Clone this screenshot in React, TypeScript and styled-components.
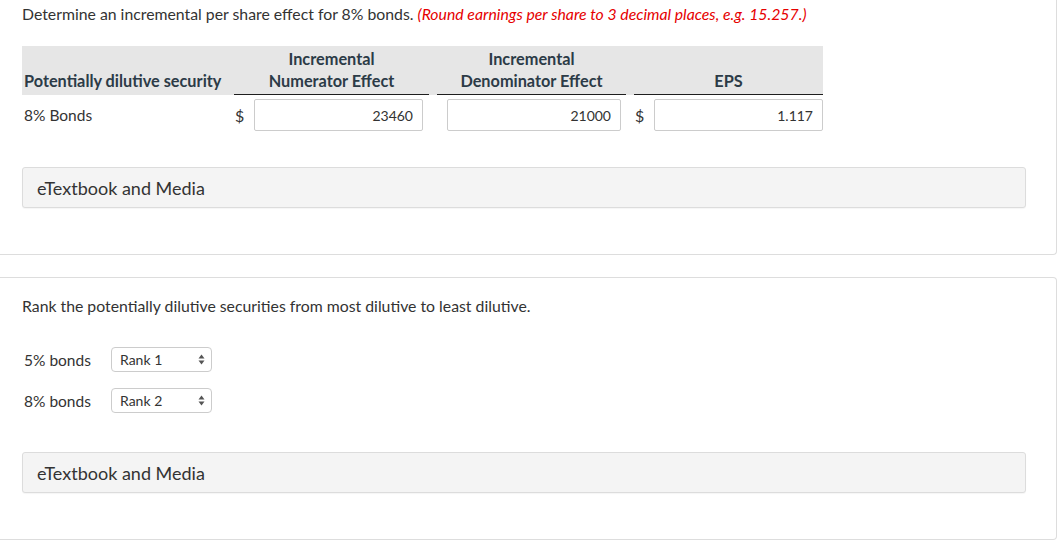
import React from "react";
import styled, { createGlobalStyle } from "styled-components";

const Global = createGlobalStyle`
  html, body { margin: 0; padding: 0; background: #ffffff; }
  body { font-family: Lato, "Noto Sans", sans-serif; color: #333333; }
  * { box-sizing: border-box; }
`;

const Page = styled.div`
  width: 1062px;
  height: 548px;
  overflow: hidden;
  padding-right: 5px;
  display: flex;
  flex-direction: column;
  gap: 22px;
`;

const Card = styled.section<{ $first?: boolean }>`
  background: #fff;
  border: 1px solid #dddddd;
  border-left: none;
  border-top: ${(p) => (p.$first ? "none" : "1px solid #dddddd")};
  border-radius: ${(p) => (p.$first ? "0 0 4px 0" : "0 4px 4px 0")};
  padding: ${(p) => (p.$first ? "3px 30px 46px 22px" : "17px 30px 46px 22px")};
`;

const Prompt = styled.p`
  margin: 0;
  font-size: 15.8px;
  line-height: 21px;
  color: #333;
`;

const Hint = styled.em`
  color: #e60000;
  font-style: italic;
`;

const Table = styled.div`
  margin-top: 22px;
  width: 801px;
  display: grid;
  grid-template-columns: 204px 203px 197px 197px;
`;

const HeadCell = styled.div<{ $first?: boolean }>`
  background: #e6e6e6;
  padding: ${(p) => (p.$first ? "2px 0 0 2px" : "2px 0 0 8px")};
  display: flex;
  align-items: flex-end;
`;

const HeadLabel = styled.div<{ $rule?: boolean; $left?: boolean }>`
  width: 100%;
  font-weight: 700;
  font-size: 16.3px;
  line-height: 22px;
  color: #2c3b47;
  white-space: nowrap;
  text-align: ${(p) => (p.$left ? "left" : "center")};
  border-bottom: ${(p) => (p.$rule ? "1px solid #1e1e1e" : "1px solid transparent")};
  padding-bottom: 2px;
`;

const BodyCell = styled.div<{ $first?: boolean }>`
  padding: ${(p) => (p.$first ? "0 0 0 2px" : "0 0 0 5px")};
  margin-top: 4px;
  height: 32px;
  display: flex;
  align-items: center;
  font-size: 15.5px;
  color: #333;
`;

const Dollar = styled.span`
  width: 23px;
  padding-left: 4px;
  font-size: 16px;
  color: #333;
`;

const Amount = styled.input<{ $w: number; $offset?: number }>`
  width: ${(p) => p.$w}px;
  margin-left: ${(p) => p.$offset ?? 0}px;
  height: 32px;
  border: 1px solid #cccccc;
  border-radius: 2px;
  background: #fff;
  text-align: right;
  padding: 0 9px 0 6px;
  font-family: Lato, "Noto Sans", sans-serif;
  font-size: 14px;
  color: #333;
  outline: none;
`;

const MediaBar = styled.div<{ $top: number }>`
  margin-top: ${(p) => p.$top}px;
  height: 41px;
  background: #f4f4f4;
  border: 1px solid #dcdcdc;
  border-radius: 3px;
  display: flex;
  align-items: center;
  padding-left: 14px;
  font-size: 18px;
  color: #333;
  box-shadow: 0 1px 1px rgba(0, 0, 0, 0.04);
`;

const RankList = styled.div`
  margin-top: 31px;
  display: flex;
  flex-direction: column;
  gap: 16px;
`;

const RankRow = styled.div`
  display: flex;
  align-items: center;
  padding-left: 2px;
  height: 25px;
`;

const RankLabel = styled.span`
  width: 87px;
  font-size: 15.5px;
  color: #333;
`;

const SelectBox = styled.div`
  width: 101px;
  height: 25px;
  border: 1px solid #cccccc;
  border-radius: 4px;
  background: #fff;
  display: flex;
  align-items: center;
  justify-content: space-between;
  padding: 0 6px 0 8px;
  font-size: 14px;
  color: #333;
`;

const Arrows = () => (
  <svg width="7" height="11" viewBox="0 0 7 11">
    <path d="M3.5 0.5 L6.5 4.5 L0.5 4.5 Z" fill="#555" />
    <path d="M3.5 10.5 L6.5 6.5 L0.5 6.5 Z" fill="#555" />
  </svg>
);

export default function App() {
  return (
    <>
      <Global />
      <Page>
        <Card $first>
          <Prompt>
            Determine an incremental per share effect for 8% bonds.{" "}
            <Hint>(Round earnings per share to 3 decimal places, e.g. 15.257.)</Hint>
          </Prompt>
          <Table>
            <HeadCell $first>
              <HeadLabel $left>Potentially dilutive security</HeadLabel>
            </HeadCell>
            <HeadCell>
              <HeadLabel $rule>
                Incremental
                <br />
                Numerator Effect
              </HeadLabel>
            </HeadCell>
            <HeadCell>
              <HeadLabel $rule>
                Incremental
                <br />
                Denominator Effect
              </HeadLabel>
            </HeadCell>
            <HeadCell>
              <HeadLabel $rule>EPS</HeadLabel>
            </HeadCell>

            <BodyCell $first>8% Bonds</BodyCell>
            <BodyCell>
              <Dollar>$</Dollar>
              <Amount $w={169} readOnly value="23460" />
            </BodyCell>
            <BodyCell>
              <Amount $w={174} $offset={13} readOnly value="21000" />
            </BodyCell>
            <BodyCell>
              <Dollar>$</Dollar>
              <Amount $w={169} readOnly value="1.117" />
            </BodyCell>
          </Table>
          <MediaBar $top={36}>eTextbook and Media</MediaBar>
        </Card>

        <Card>
          <Prompt>Rank the potentially dilutive securities from most dilutive to least dilutive.</Prompt>
          <RankList>
            <RankRow>
              <RankLabel>5% bonds</RankLabel>
              <SelectBox>
                Rank 1
                <Arrows />
              </SelectBox>
            </RankRow>
            <RankRow>
              <RankLabel>8% bonds</RankLabel>
              <SelectBox>
                Rank 2
                <Arrows />
              </SelectBox>
            </RankRow>
          </RankList>
          <MediaBar $top={39}>eTextbook and Media</MediaBar>
        </Card>
      </Page>
    </>
  );
}
